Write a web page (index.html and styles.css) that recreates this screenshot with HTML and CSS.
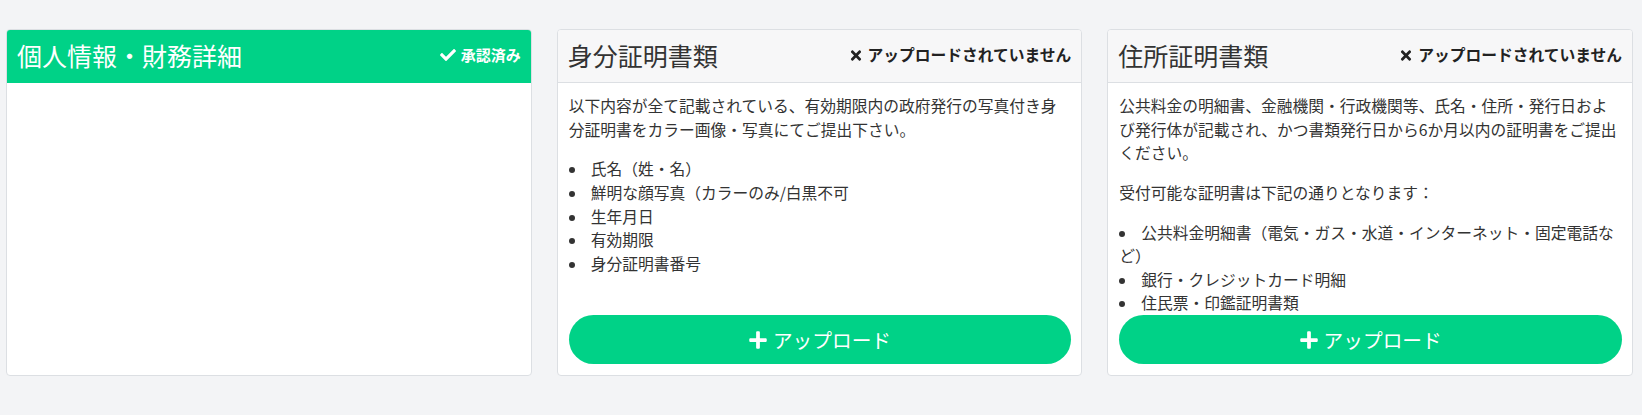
FILE: index.html
```html
<!DOCTYPE html>
<html lang="ja">
<head>
<meta charset="utf-8">
<title>書類アップロード</title>
<link rel="stylesheet" href="styles.css">
</head>
<body>
<div class="cards">
  <section class="card">
    <header class="card-header card-header--done">
      <h2 class="card-title">個人情報・財務詳細</h2>
      <span class="status status--done">
        <svg class="status-icon status-icon--check" viewBox="0 0 512 512"><path d="M173.9 439.4 7.5 273c-10-10-10-26.2 0-36.2l36.2-36.2c10-10 26.2-10 36.2 0L192 312.7 432.1 72.6c10-10 26.2-10 36.2 0l36.2 36.2c10 10 10 26.2 0 36.2L210.1 439.4c-10 10-26.2 10-36.2 0z"/></svg>
        承認済み
      </span>
    </header>
    <div class="card-body"></div>
  </section>

  <section class="card">
    <header class="card-header">
      <h2 class="card-title">身分証明書類</h2>
      <span class="status">
        <svg class="status-icon status-icon--x" viewBox="0 0 352 512"><path d="m242.7 256 100.1-100.1c12.3-12.3 12.3-32.2 0-44.5l-22.2-22.2c-12.3-12.3-32.2-12.3-44.5 0L176 189.3 75.9 89.2c-12.3-12.3-32.2-12.3-44.5 0L9.2 111.4c-12.3 12.3-12.3 32.2 0 44.5L109.3 256 9.2 356.1c-12.3 12.3-12.3 32.2 0 44.5l22.2 22.2c12.3 12.3 32.2 12.3 44.5 0L176 322.7l100.1 100.1c12.3 12.3 32.2 12.3 44.5 0l22.2-22.2c12.3-12.3 12.3-32.2 0-44.5L242.7 256z"/></svg>
        アップロードされていません
      </span>
    </header>
    <div class="card-body">
      <div class="doc-text">
        <p>以下内容が全て記載されている、有効期限内の政府発行の写真付き身分証明書をカラー画像・写真にてご提出下さい。</p>
        <ul>
          <li>氏名（姓・名）</li>
          <li>鮮明な顔写真（カラーのみ/白黒不可</li>
          <li>生年月日</li>
          <li>有効期限</li>
          <li>身分証明書番号</li>
        </ul>
      </div>
      <button class="upload-btn" type="button">
        <svg class="plus" viewBox="0 0 448 512"><path d="M416 208H272V64c0-17.7-14.3-32-32-32h-32c-17.7 0-32 14.3-32 32v144H32c-17.7 0-32 14.3-32 32v32c0 17.7 14.3 32 32 32h144v144c0 17.7 14.3 32 32 32h32c17.7 0 32-14.3 32-32V304h144c17.7 0 32-14.3 32-32v-32c0-17.7-14.3-32-32-32z"/></svg>
        アップロード
      </button>
    </div>
  </section>

  <section class="card">
    <header class="card-header">
      <h2 class="card-title">住所証明書類</h2>
      <span class="status">
        <svg class="status-icon status-icon--x" viewBox="0 0 352 512"><path d="m242.7 256 100.1-100.1c12.3-12.3 12.3-32.2 0-44.5l-22.2-22.2c-12.3-12.3-32.2-12.3-44.5 0L176 189.3 75.9 89.2c-12.3-12.3-32.2-12.3-44.5 0L9.2 111.4c-12.3 12.3-12.3 32.2 0 44.5L109.3 256 9.2 356.1c-12.3 12.3-12.3 32.2 0 44.5l22.2 22.2c12.3 12.3 32.2 12.3 44.5 0L176 322.7l100.1 100.1c12.3 12.3 32.2 12.3 44.5 0l22.2-22.2c12.3-12.3 12.3-32.2 0-44.5L242.7 256z"/></svg>
        アップロードされていません
      </span>
    </header>
    <div class="card-body">
      <div class="doc-text">
        <p>公共料金の明細書、金融機関・行政機関等、氏名・住所・発行日および発行体が記載され、かつ書類発行日から6か月以内の証明書をご提出ください。</p>
        <p>受付可能な証明書は下記の通りとなります：</p>
        <ul>
          <li>公共料金明細書（電気・ガス・水道・インターネット・固定電話など）</li>
          <li>銀行・クレジットカード明細</li>
          <li>住民票・印鑑証明書類</li>
        </ul>
      </div>
      <button class="upload-btn" type="button">
        <svg class="plus" viewBox="0 0 448 512"><path d="M416 208H272V64c0-17.7-14.3-32-32-32h-32c-17.7 0-32 14.3-32 32v144H32c-17.7 0-32 14.3-32 32v32c0 17.7 14.3 32 32 32h144v144c0 17.7 14.3 32 32 32h32c17.7 0 32-14.3 32-32V304h144c17.7 0 32-14.3 32-32v-32c0-17.7-14.3-32-32-32z"/></svg>
        アップロード
      </button>
    </div>
  </section>
</div>
</body>
</html>
```

FILE: styles.css
```css
* { box-sizing: border-box; }

html, body {
  margin: 0;
  background: #f3f4f6;
}

body {
  font-family: "Noto Sans CJK JP", "Noto Sans", "Liberation Sans", sans-serif;
  color: #333;
  font-size: 15.75px;
  line-height: 1.5;
}

.cards {
  display: flex;
  gap: 25px;
  padding: 29px 9px 0 6px;
}

.card {
  flex: 1 1 0;
  min-width: 0;
  height: 347px;
  display: flex;
  flex-direction: column;
  background: #fff;
  border: 1px solid #dcdfe3;
  border-radius: 4px;
  overflow: hidden;
}

.card-header {
  height: 53px;
  flex: none;
  display: flex;
  align-items: center;
  justify-content: space-between;
  padding: 0 10px 2px 10px;
  background: #f7f7f8;
  border-bottom: 1px solid #dcdfe3;
}

.card-header--done {
  background: #00d287;
  border-bottom-color: #00d287;
  color: #fff;
}

.card-title {
  margin: 0;
  font-size: 25px;
  font-weight: 400;
  line-height: 1.2;
  color: #333;
}

.card-header--done .card-title { color: #fff; }

.status {
  display: flex;
  align-items: center;
  gap: 6px;
  font-weight: 700;
  font-size: 15.75px;
  color: #222;
}

.status--done {
  color: #fff;
  font-size: 15px;
  gap: 5px;
}

.status-icon { fill: currentColor; display: block; }
.status-icon--check { width: 16px; height: 16px; }
.status-icon--x { width: 12px; height: 15px; }

.card-body {
  flex: 1;
  min-height: 0;
  display: flex;
  flex-direction: column;
  padding: 11px 10px 11px 11px;
}

.doc-text {
  flex: 1;
  min-height: 0;
  overflow: hidden;
}

.doc-text p { margin: 0 0 16px; }

.doc-text ul {
  margin: 0;
  padding: 0;
  list-style: disc inside;
}

.doc-text li::marker { font-size: 15px; }

.upload-btn {
  flex: none;
  margin-top: 2px;
  height: 49px;
  width: 100%;
  border: 0;
  border-radius: 25px;
  background: #00d287;
  color: #fff;
  font-family: inherit;
  font-size: 19.7px;
  display: flex;
  align-items: center;
  justify-content: center;
  gap: 6px;
  cursor: pointer;
}

.plus { width: 18px; height: 20px; fill: #fff; }
```
